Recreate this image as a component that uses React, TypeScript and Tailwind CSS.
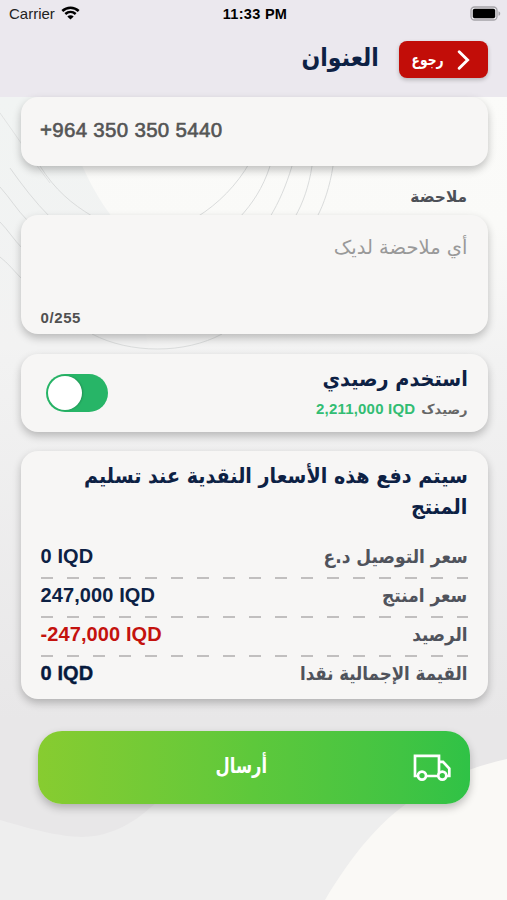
import type { ReactNode } from 'react'

const arabic = "font-['DejaVu_Sans','Liberation_Sans',sans-serif] whitespace-nowrap"
const card = 'ml-[20.5px] mr-[19.5px] rounded-[17px] bg-[#f7f6f5] shadow-[0_4px_8px_rgba(0,0,0,0.24)]'

const rows: { label: string; fit: string; value: string; color: string }[] = [
  { label: 'سعر التوصيل د.ع', fit: 'scale-x-[0.897]', value: '0 IQD', color: 'text-[#0d2144]' },
  { label: 'سعر امنتج', fit: 'scale-x-[0.895]', value: '247,000 IQD', color: 'text-[#0d2144]' },
  { label: 'الرصيد', fit: 'scale-x-[0.885]', value: '-247,000 IQD', color: 'text-[#c4120e]' },
  { label: 'القيمة الإجمالية نقدا', fit: 'scale-x-[0.875]', value: '0 IQD', color: 'text-[#071a3d] [-webkit-text-stroke:0.4px_#071a3d]' },
]

function Arabic({ className, children }: { className: string; children: ReactNode }) {
  return <span className={`inline-block origin-right ${arabic} ${className}`}>{children}</span>
}

function Background() {
  return (
    <svg className="absolute inset-0 -z-10 h-full w-full" viewBox="0 0 507 900" fill="none">
      <defs>
        <linearGradient id="page" x1="0" y1="0" x2="0" y2="1">
          <stop offset="0.1" stopColor="#fbfbf9" />
          <stop offset="0.25" stopColor="#fafaf8" />
          <stop offset="0.4" stopColor="#f2f2f2" />
          <stop offset="0.8" stopColor="#e8e7e8" />
        </linearGradient>
        <linearGradient id="leaf" x1="0" y1="0" x2="0" y2="1">
          <stop offset="0" stopColor="#f1f4f3" />
          <stop offset="1" stopColor="#f2f2f2" />
        </linearGradient>
      </defs>
      <rect width="507" height="900" fill="url(#page)" />
      <path d="M0 97H62C68 140 88 185 112 217L150 350H0Z" fill="url(#leaf)" />
      <path d="M0 820C55 836 83 842 110 832C135 824 150 808 170 790H507V900H0Z" fill="#eeeeee" />
      <path d="M325 900C350 858 382 815 425 792C455 773 481 765 507 759V900Z" fill="#faf9f6" />
      <g stroke="#dadcdc" strokeWidth="1">
        <path d="M0 113C18 138 32 160 50 183" opacity="0.7" />
        <path d="M10 168C22 185 35 202 50 217" />
        <path d="M0 187C10 198 17 210 27 220" />
        <path d="M0 222C8 230 14 240 22 248" />
        <path d="M0 257C8 263 14 271 22 279" />
        <path d="M40 166C55 190 72 204 92 216" />
        <path d="M250 162C237 185 218 204 197 217" />
        <path d="M270 166C263 188 252 204 240 217" />
        <path d="M292 166C286 186 279 202 270 217" />
        <path d="M312 166C309 186 303 203 295 217" />
        <path d="M333 166C330 186 324 204 317 217" />
        <path d="M92 334C130 354 185 354 222 334" />
      </g>
    </svg>
  )
}

function StatusBar() {
  return (
    <div className="grid h-7 grid-cols-3 items-center pl-[9px] pr-[6px] text-black">
      <div className="flex items-center gap-[6px]">
        <span className="pt-px text-[15px] text-[#222]">Carrier</span>
        <svg className="-mt-[2px]" width="19" height="14" viewBox="0 0 19 14" fill="none" stroke="#000" strokeWidth="2.5">
          <path d="M1.3 5C6 .5 13 .5 17.7 5" />
          <path d="M4.3 8C7.4 5.2 11.6 5.2 14.7 8" />
          <path d="M9.5 13.6 6.3 10.4C8.2 8.7 10.8 8.7 12.7 10.4Z" fill="#000" stroke="none" />
        </svg>
      </div>
      <span className="pt-px text-center text-[14.5px] font-bold tracking-[0.3px]">11:33 PM</span>
      <svg className="-mt-[2px] justify-self-end" width="31" height="15" viewBox="0 0 31 15">
        <rect x="1" y="1" width="26" height="13" rx="3.5" fill="#eceaee" stroke="#a5a3a8" strokeWidth="1.3" />
        <rect x="2.8" y="2.8" width="22.4" height="9.4" rx="1.8" fill="#000" />
        <path d="M28.5 5.2C30.8 6 30.8 9 28.5 9.8Z" fill="#a5a3a8" />
      </svg>
    </div>
  )
}

function Header() {
  return (
    <header className="h-[97px] bg-[#ebe8ee]">
      <StatusBar />
      <div dir="rtl" className="flex items-start gap-5 pt-[13px] pr-[19px]">
        <button className="flex h-[37px] w-[89px] items-center rounded-[8px] bg-[#c20d08] pr-[18px] text-white shadow-[0_2px_4px_rgba(0,0,0,0.22)]">
          <svg width="13" height="20" viewBox="0 0 13 20" fill="none" stroke="currentColor" strokeWidth="2.9" strokeLinecap="round">
            <path d="M2.2 1.7 10.6 10 2.2 18.3" />
          </svg>
          <Arabic className="mr-[13px] scale-x-[0.77] text-[16px] font-bold">رجوع</Arabic>
        </button>
        <h1 className="pt-px leading-8">
          <Arabic className="scale-x-[0.88] text-[25px] font-bold text-[#0d2144]">العنوان</Arabic>
        </h1>
      </div>
    </header>
  )
}

function Toggle() {
  return (
    <button role="switch" aria-checked="true" className="flex h-[38px] w-[62px] items-center rounded-full bg-[#27b567] pl-[2px]">
      <span className="h-[34px] w-[34px] rounded-full bg-white shadow-[1px_0_2px_rgba(0,0,0,0.2)]" />
    </button>
  )
}

export default function App() {
  return (
    <div className="relative isolate h-[900px] w-[507px] overflow-hidden font-['Liberation_Sans',Arial,sans-serif]">
      <Background />
      <Header />

      <main>
        <section className={`${card} flex h-[69px] items-center px-[19.5px] pb-[2px]`}>
          <span className="text-[20.5px] tracking-[0.3px] text-[#555] [-webkit-text-stroke:0.6px_#555]">+964 350 350 5440</span>
        </section>

        <div dir="rtl" className="flex h-[49px] items-center pr-10 pt-3">
          <Arabic className="scale-x-[0.96] text-[16px] font-bold text-[#4d5057]">ملاحضة</Arabic>
        </div>

        <section className={`${card} flex h-[119px] flex-col justify-between px-5 pb-[7px] pt-[19px]`}>
          <p dir="rtl" className="leading-7">
            <Arabic className="text-[19.5px] text-[#999]">أي ملاحضة لديک</Arabic>
          </p>
          <span className="text-[15px] leading-[18px] font-bold tracking-[0.6px] text-[#505050]">0/255</span>
        </section>

        <section className={`${card} mt-5 flex h-[78px] items-center justify-between pl-[25px] pr-5`}>
          <Toggle />
          <div dir="rtl" className="flex flex-col">
            <Arabic className="scale-x-[0.915] text-[21px] leading-8 font-bold text-[#0d2144]">استخدم رصيدي</Arabic>
            <div className="flex h-7 items-center gap-[6px]">
              <Arabic className="pt-px text-[13px] font-bold text-[#666]">رصيدک</Arabic>
              <span dir="ltr" className="text-[15px] font-bold tracking-[0.2px] text-[#32bd73]">2,211,000 IQD</span>
            </div>
          </div>
        </section>

        <section className={`${card} mt-[19px] h-[248px] px-5 pt-[9px]`}>
          <h2 dir="rtl" className="flex flex-col items-start text-[21px] leading-8 font-bold text-[#0d2144]">
            <Arabic className="scale-x-[0.912]">سيتم دفع هذه الأسعار النقدية عند تسليم</Arabic>
            <Arabic className="-mt-px scale-x-[0.92]">المنتج</Arabic>
          </h2>
          <div className="mt-[15px]">
            {rows.map((row, i) => (
              <div key={row.label}>
                {i > 0 && (
                  <div className="relative top-[2px] h-[2px] bg-[repeating-linear-gradient(to_right,#c1bfbf_0_12px,transparent_12px_26px)]" />
                )}
                <div className="flex h-[37px] items-center justify-between">
                  <span className={`pb-[2px] text-[20px] font-bold tracking-[0.1px] ${row.color}`}>{row.value}</span>
                  <span dir="rtl">
                    <Arabic className={`text-[19px] font-bold text-[#50535c] ${row.fit}`}>{row.label}</Arabic>
                  </span>
                </div>
              </div>
            ))}
          </div>
        </section>

        <button dir="rtl" className="mt-8 ml-[38px] flex h-[73px] w-[432px] items-center rounded-[24px] bg-linear-to-r from-[#87cc30] via-[#5dc83b] to-[#2fc246] pr-[19px] text-white shadow-[0_4px_8px_rgba(0,0,0,0.24)]">
          <svg width="38" height="27" viewBox="0 0 38 27" fill="none" stroke="currentColor" strokeWidth="2.7">
            <path d="M4.5 22H2V1.8H26V22H13" />
            <path d="M26 7.8H30L36.3 14.5V22H33.5" />
            <circle cx="9" cy="21.6" r="4" fill="#3bc443" />
            <circle cx="29.3" cy="21.6" r="4" fill="#36c344" />
          </svg>
          <Arabic className="mr-[146px] mb-[2px] scale-x-[0.78] text-[21px] font-bold">أرسال</Arabic>
        </button>
      </main>
    </div>
  )
}
